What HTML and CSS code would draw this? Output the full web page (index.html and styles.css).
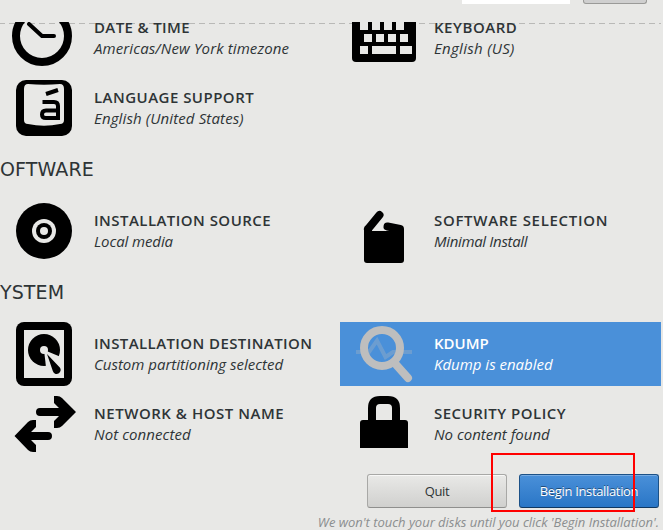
FILE: index.html
```html
<!DOCTYPE html>
<html lang="en">
<head>
<meta charset="utf-8">
<title>Installation Summary</title>
<link rel="stylesheet" href="styles.css">
</head>
<body>
<div class="hub">
  <header class="topbar">
    <div class="layout-field"></div>
    <div class="help-button"></div>
  </header>
  <main class="summary">
    <section class="spokes">
      <article class="spoke">
        <svg class="icon" viewBox="0 0 64 64"><circle cx="30" cy="30" r="26" fill="none" stroke="#000" stroke-width="8"/><path d="M17 18L30 30H42" fill="none" stroke="#000" stroke-width="4" stroke-linecap="round" stroke-linejoin="round"/></svg>
        <div class="label"><h3 class="t-date">DATE &amp; TIME</h3><p class="s-date">Americas/New York timezone</p></div>
      </article>
      <article class="spoke">
        <svg class="icon" viewBox="0 0 64 64"><rect y="4" width="64" height="52" rx="4"/><path class="cut" d="M8 16h8v8H8zM20 16h8v8h-8zM32 16h8v8h-8zM44 16h8v8h-8zM12 28h8v8h-8zM24 28h8v8h-8zM36 28h8v8h-8zM48 28h8v8h-8zM8 40h8v8H8zM20 40h24v8H20zM48 40h12v8H48z"/></svg>
        <div class="label"><h3 class="t-keyboard">KEYBOARD</h3><p class="s-keyboard">English (US)</p></div>
      </article>
      <article class="spoke">
        <svg class="icon" viewBox="0 0 64 64"><rect x="4" y="4" width="56" height="56" rx="10"/><path class="cut" d="M12 13Q12 8 16 8Q32 9.500 48 8Q52 8 52 13V44Q52 48 48 48Q32 51.500 16 48Q12 48 12 44z"/><path d="M34 18L46 14M30.500 26H42Q46 26 46 30V42H34Q30 42 30 38.500Q30 34.500 34 34.500H46" fill="none" stroke="#000" stroke-width="4"/></svg>
        <div class="label"><h3 class="t-language">LANGUAGE SUPPORT</h3><p class="s-language">English (United States)</p></div>
      </article>
    </section>

    <h2>OFTWARE</h2>
    <section class="spokes">
      <article class="spoke">
        <svg class="icon" viewBox="0 0 64 64"><circle cx="32" cy="32" r="28"/><circle class="cut" cx="32" cy="32" r="12"/><circle cx="32" cy="32" r="8"/><circle class="cut" cx="32" cy="32" r="4"/></svg>
        <div class="label"><h3 class="t-source">INSTALLATION SOURCE</h3><p class="s-source">Local media</p></div>
      </article>
      <article class="spoke">
        <svg class="icon" viewBox="0 0 64 64"><path d="M12 32H52V61Q52 64 49 64H15Q12 64 12 61z"/><path d="M16 30L27.500 16M35.500 27.500L48 30V34M16 30V36" fill="none" stroke="#000" stroke-width="8" stroke-linecap="round" stroke-linejoin="round"/></svg>
        <div class="label"><h3 class="t-selection">SOFTWARE SELECTION</h3><p class="s-selection">Minimal Install</p></div>
      </article>
    </section>

    <h2>YSTEM</h2>
    <section class="spokes">
      <article class="spoke">
        <svg class="icon" viewBox="0 0 64 64"><rect x="4" width="56" height="64" rx="8"/><path class="cut" d="M12 8H52V56H12z"/><circle cx="32" cy="28" r="16"/><path class="cut" d="M32 28L49 35L48 45H34z"/><circle class="cut" cx="32" cy="28" r="4"/><path d="M35 32L47.800 45.500A4 4 0 1 1 40.800 49z"/></svg>
        <div class="label"><h3 class="t-destination">INSTALLATION DESTINATION</h3><p>Custom partitioning selected</p></div>
      </article>
      <article class="spoke selected">
        <svg class="icon" viewBox="0 0 64 64"><path class="pulse" d="M4 30H17L25 18.500L33.500 35L41 30H60"/><circle class="lens" cx="30" cy="26" r="18"/><path class="lens" d="M43.500 42L56 56" stroke-linecap="round"/></svg>
        <div class="label"><h3>KDUMP</h3><p>Kdump is enabled</p></div>
      </article>
      <article class="spoke">
        <svg class="icon" viewBox="0 0 64 64"><path d="M28 16H47L42 11V4H45Q48 4 50 6L64 20L50 34Q48 36 45 36H42V29L47 24H28A4 4 0 0 1 28 16zM36 40H19L24 35V28H21Q18 28 16 30L2.500 44L16 58Q18 60 21 60H24V53L19 48H36A4 4 0 0 0 36 40z"/></svg>
        <div class="label"><h3 class="t-network">NETWORK &amp; HOST NAME</h3><p class="s-network">Not connected</p></div>
      </article>
      <article class="spoke">
        <svg class="icon" viewBox="0 0 64 64"><path d="M8 56V31Q8 28 11 28H53Q56 28 56 31V56z"/><path d="M20 30V16Q20 8 28 8H36Q44 8 44 16V30" fill="none" stroke="#000" stroke-width="8"/></svg>
        <div class="label"><h3 class="t-security">SECURITY POLICY</h3><p>No content found</p></div>
      </article>
    </section>
  </main>
  <footer class="actions">
    <div class="buttons">
      <button class="btn">Quit</button>
      <button class="btn primary">Begin Installation</button>
    </div>
    <p class="note">We won't touch your disks until you click 'Begin Installation'.</p>
  </footer>
  <div class="highlight"></div>
</div>
</body>
</html>
```
FILE: styles.css
```css
* { box-sizing: border-box; margin: 0; padding: 0; }
body {
  background: #e8e8e6;
  color: #2e3436;
  font-family: "Open Sans", sans-serif;
  overflow: hidden;
}
.hub { position: relative; width: 663px; height: 530px; overflow: hidden; white-space: nowrap; }
.topbar { height: 22px; display: flex; align-items: flex-start; justify-content: flex-end; gap: 13px; padding-right: 16px; }
.layout-field { width: 108px; height: 4px; background: #fff; }
.help-button { width: 64px; height: 4px; background: #cfcfcf; border: 1px solid #9a9a98; border-top: 0; border-radius: 0 0 3px 3px; }
.summary { position: relative; isolation: isolate; height: 434px; overflow: hidden; display: flex; flex-direction: column; justify-content: flex-end; }
.summary::before {
  content: "";
  position: absolute;
  z-index: -1;
  top: 1px;
  left: 0;
  width: 661px;
  height: 1px;
  background: repeating-linear-gradient(90deg, #b9b9b7 0 5px, transparent 5px 9px, #b9b9b7 9px 10px);
}
.spokes { display: grid; grid-template-columns: 334px 321px; gap: 6px; flex: none; }
.spoke { display: flex; gap: 18px; height: 64px; padding-left: 12px; }
.icon { width: 64px; height: 64px; flex: none; }
.cut { fill: #e8e8e6; }
.label { padding-top: 11px; }
h3 { font-size: 15px; font-weight: 600; line-height: 21px; height: 21px; }
.label p { font-size: 15px; font-style: italic; line-height: 21px; }
h2 { height: 59px; font: 400 19px/59px "DejaVu Sans", sans-serif; letter-spacing: .1px; flex: none; }

/* Tracking of the individual labels */
.t-date { letter-spacing: .37px; }
.t-keyboard { letter-spacing: .55px; }
.t-language { letter-spacing: .47px; }
.t-source { letter-spacing: .46px; }
.t-selection { letter-spacing: .69px; }
.t-destination { letter-spacing: .41px; }
.t-network { letter-spacing: .53px; }
.t-security { letter-spacing: .49px; }
.s-date { letter-spacing: .12px; }
.s-keyboard { letter-spacing: .3px; }
.s-language { letter-spacing: .13px; }
.s-source { letter-spacing: -.1px; }
.s-selection { letter-spacing: -.33px; }
.s-network { letter-spacing: .08px; }

.selected { background: #4a90d9; color: #fff; }
.lens { fill: none; stroke: #bebebe; stroke-width: 8; }
.pulse { fill: none; stroke: #bebebe; stroke-width: 4; opacity: .3; }
.actions { padding: 18px 4px 0 0; }
.buttons { display: flex; justify-content: flex-end; gap: 12px; }
.btn {
  width: 140px;
  height: 34px;
  border: 1px solid #a8a8a6;
  border-bottom-color: #8f8f8d;
  border-radius: 3px;
  background: linear-gradient(#e9e9e7, #d0d0ce);
  box-shadow: inset 0 1px #f8f8f7;
  color: #2e3436;
  font: 13px "Open Sans", sans-serif;
  letter-spacing: -.34px;
}
.primary {
  border-color: #1c5187;
  border-bottom-color: #103861;
  background: linear-gradient(#4a90d9, #2a76c6);
  box-shadow: inset 0 1px #76abe2;
  color: #fff;
  text-shadow: 0 -1px rgba(0, 0, 0, .45);
}
.note { height: 22px; padding-top: 4px; text-align: right; font-size: 13px; font-style: italic; line-height: 20px; letter-spacing: -.02px; color: #8b8e8f; }
.highlight { position: absolute; left: 491px; top: 453px; width: 144px; height: 59px; border: 2px solid #f00; }
```
